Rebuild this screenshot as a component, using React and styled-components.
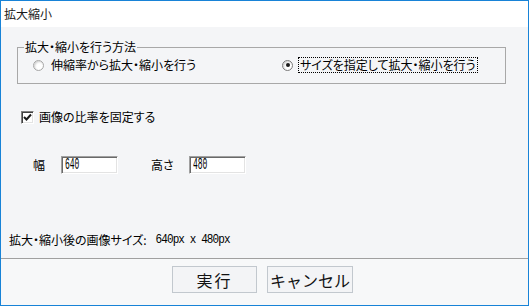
import React from "react";
import styled, { createGlobalStyle } from "styled-components";

const Global = createGlobalStyle`
  html, body { margin: 0; padding: 0; background: #ffffff; }
  body { font-family: "Noto Sans CJK JP", "Noto Sans", sans-serif; color: #000; }
  * { box-sizing: border-box; }
`;

const Window = styled.div`
  width: 529px;
  height: 306px;
  border: 1px solid #1883d7;
  display: flex;
  flex-direction: column;
  background: #f4f5f7;
`;

const TitleBar = styled.div`
  height: 26px;
  background: #ffffff;
  display: flex;
  align-items: center;
  padding-left: 3px;
  font-size: 12px;
  line-height: 14px;
  color: #1a1a1a;
`;

const Content = styled.div`
  flex: 1;
  display: flex;
  flex-direction: column;
  padding: 13px 22px 11px 16px;
  font-size: 12px;
  line-height: 14px;
  font-feature-settings: "palt";
`;

const Group = styled.fieldset`
  margin: 0;
  padding: 3px 0 10px 15px;
  border: 1px solid #a8a8a8;
  display: grid;
  grid-template-columns: 249px 1fr;
  align-items: center;
`;

const Legend = styled.legend`
  padding: 0 1px;
  margin-left: -9px;
  font-size: 12px;
  line-height: 14px;
`;

const Choice = styled.label`
  display: flex;
  align-items: center;
  gap: 5px;
`;

const RadioDot = styled.span`
  width: 11px;
  height: 11px;
  border-radius: 50%;
  border: 1px solid ${(p) => (p.$on ? "#7a7a7a" : "#a6a6a6")};
  background: #fff;
  box-shadow: inset 1px 1px 2px #cfcfcf;
  display: flex;
  align-items: center;
  justify-content: center;
  flex: none;
  &::after {
    content: "";
    width: 4px;
    height: 4px;
    border-radius: 50%;
    background: ${(p) => (p.$on ? "#1a1a1a" : "transparent")};
  }
`;

const ChoiceText = styled.span`
  padding: 0 1px;
  border: 1px dotted ${(p) => (p.$focus ? "#000" : "transparent")};
`;

const CheckRow = styled.label`
  margin-top: 26px;
  margin-left: 4px;
  display: flex;
  align-items: center;
  gap: 5px;
`;

const CheckBox = styled.span`
  width: 13px;
  height: 13px;
  background: #fff;
  border-style: solid;
  border-width: 1px;
  border-color: #808080 #ffffff #ffffff #808080;
  box-shadow: inset 1px 1px 0 #404040, inset -1px -1px 0 #e3e3e3;
  display: flex;
  align-items: center;
  justify-content: center;
  flex: none;
`;

const SizeRow = styled.div`
  margin-top: 32px;
  margin-left: 16px;
  display: flex;
  align-items: center;
`;

const FieldLabel = styled.span`
  width: ${(p) => p.$w}px;
  flex: none;
`;

const Field = styled.div`
  width: 57px;
  height: 18px;
  background: #fff;
  border-style: solid;
  border-width: 1px;
  border-color: #a0a0a0 #ffffff #ffffff #a0a0a0;
  box-shadow: inset 1px 1px 0 #696969, inset -1px -1px 0 #e3e3e3;
  margin-right: ${(p) => p.$mr || 0}px;
  display: flex;
  align-items: center;
  padding-left: 3px;
  overflow: hidden;
`;

const Narrow = styled.span`
  font-family: "Liberation Mono", "DejaVu Sans Mono", monospace;
  font-size: 16px;
  line-height: 16px;
  display: inline-block;
  transform: scaleX(0.5);
  transform-origin: left center;
`;

const Result = styled.div`
  margin-top: auto;
  margin-left: -8px;
  display: flex;
  align-items: center;
`;

const ResultNum = styled.span`
  font-family: "Liberation Mono", "DejaVu Sans Mono", monospace;
  font-size: 11px;
  letter-spacing: -0.9px;
  margin-left: 9px;
  display: inline-block;
  transform: scaleY(1.15);
`;

const Footer = styled.div`
  height: 47px;
  border-top: 1px solid #a0a0a0;
  background: #f7f8f9;
  display: flex;
  justify-content: center;
  align-items: flex-start;
  gap: 10px;
  padding-top: 7px;
  padding-right: 4px;
`;

const Button = styled.button`
  width: ${(p) => p.$w}px;
  height: 27px;
  background: #f3f4f6;
  border: 1px solid #c2c8ce;
  font-family: "Noto Sans CJK JP", sans-serif;
  font-size: 16px;
  line-height: 18px;
  color: #111;
  padding: 0;
  letter-spacing: ${(p) => p.$ls || 0}px;
`;

export default function App() {
  return (
    <>
      <Global />
      <Window>
        <TitleBar>拡大縮小</TitleBar>
        <Content>
          <Group>
            <Legend>拡大・縮小を行う方法</Legend>
            <Choice>
              <RadioDot />
              <ChoiceText>伸縮率から拡大・縮小を行う</ChoiceText>
            </Choice>
            <Choice>
              <RadioDot $on />
              <ChoiceText $focus>サイズを指定して拡大・縮小を行う</ChoiceText>
            </Choice>
          </Group>
          <CheckRow>
            <CheckBox>
              <svg width="9" height="9" viewBox="0 0 9 9">
                <path d="M1 4 L3.5 6.5 L8 1.5" fill="none" stroke="#1a1a1a" strokeWidth="2" />
              </svg>
            </CheckBox>
            画像の比率を固定する
          </CheckRow>
          <SizeRow>
            <FieldLabel $w={28}>幅</FieldLabel>
            <Field $mr={33}><Narrow>640</Narrow></Field>
            <FieldLabel $w={38}>高さ</FieldLabel>
            <Field><Narrow>480</Narrow></Field>
          </SizeRow>
          <Result>
            拡大・縮小後の画像サイズ:<ResultNum>640px x 480px</ResultNum>
          </Result>
        </Content>
        <Footer>
          <Button $w={85} $ls={2}>実行</Button>
          <Button $w={86}>キャンセル</Button>
        </Footer>
      </Window>
    </>
  );
}
